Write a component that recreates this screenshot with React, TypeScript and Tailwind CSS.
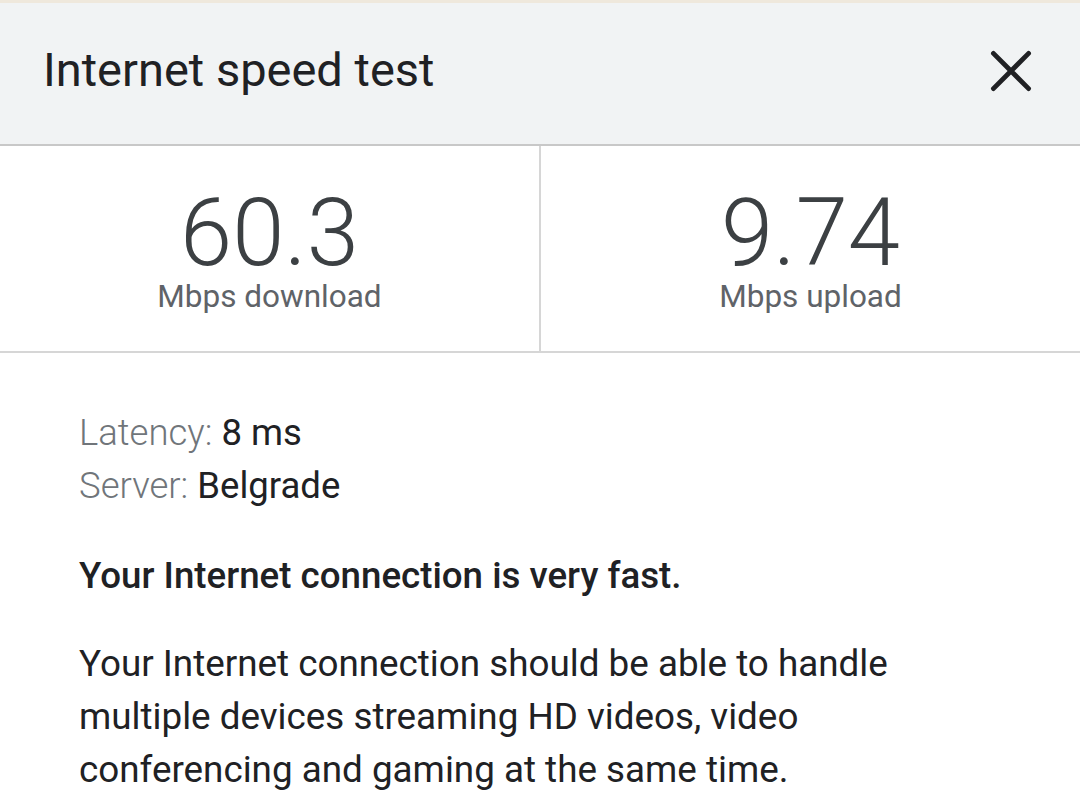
const Stat = ({ value, label }: { value: string; label: string }) => (
  <div className="flex flex-1 flex-col items-center pt-[44px]">
    <div className="text-[94px] font-light leading-[86px] text-[#3c4043]">{value}</div>
    <div className="mt-[6px] text-[31.5px] leading-[30px] text-[#5f6368]">{label}</div>
  </div>
)

const App = () => {
  return (
    <div className="h-[810px] w-[1080px] overflow-hidden bg-white font-['Roboto',sans-serif]">
      <div className="h-[3px] bg-[#efe8dc]" />
      <header className="flex h-[143px] items-center justify-between border-b-2 border-[#c8c8c8] bg-[#f1f3f4] pb-[6px] pl-[43px] pr-[45px]">
        <h1 className="text-[47px] font-normal text-[#202124]">Internet speed test</h1>
        <svg width="48" height="48" viewBox="0 0 24 24" className="text-[#202124]">
          <path d="M3.2 3.2 L20.8 20.8 M20.8 3.2 L3.2 20.8" stroke="currentColor" strokeWidth="2.4" strokeLinecap="round" />
        </svg>
      </header>
      <div className="flex h-[207px] border-b-2 border-[#d6d6d6]">
        <Stat value="60.3" label="Mbps download" />
        <div className="w-[2px] bg-[#d6d6d6]" />
        <Stat value="9.74" label="Mbps upload" />
      </div>
      <div className="pl-[79px] pr-[100px] pt-[53px] text-[#202124]">
        <div className="text-[36.5px] leading-[53px]">
          <p>
            <span className="font-light text-[#70757a]">Latency:</span> 8 ms
          </p>
          <p>
            <span className="font-light text-[#70757a]">Server:</span> Belgrade
          </p>
        </div>
        <p className="mt-[37px] text-[36.7px] font-medium leading-[53px]">Your Internet connection is very fast.</p>
        <p className="mt-[35px] text-[36.8px] leading-[53px]">
          Your Internet connection should be able to handle multiple devices streaming HD videos, video
          conferencing and gaming at the same time.
        </p>
      </div>
    </div>
  )
}

export default App
